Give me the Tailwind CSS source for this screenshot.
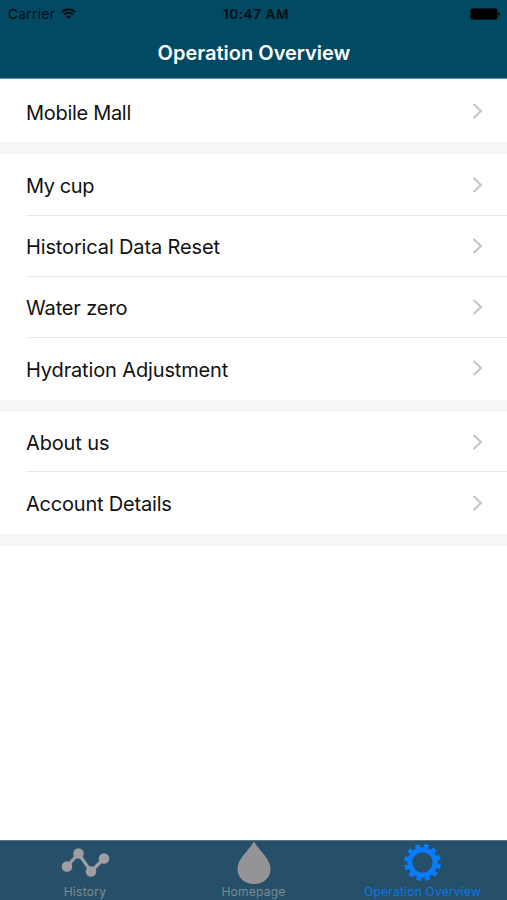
<!DOCTYPE html>
<html lang="en">
<head>
  <meta charset="UTF-8">
  <meta name="viewport" content="width=device-width, initial-scale=1.0">
  <title>Operation Overview</title>
  <script src="https://cdn.jsdelivr.net/npm/@tailwindcss/browser@4"></script>
</head>
<body class="bg-white font-['Inter',sans-serif] text-[#111111]">

<div class="flex flex-col h-[900px] w-[507px] overflow-hidden">

  <!-- Header -->
  <header class="h-[79px] shrink-0 bg-[#024963] border-b border-[#6b93a3]">
    <div class="grid grid-cols-3 items-center h-7 pl-2 pr-[7px] text-[#020c12]">
      <div class="flex items-center gap-1.5">
        <span class="text-[13.5px] tracking-[0.45px]">Carrier</span>
        <svg class="w-[15px] h-[11px] mb-0.5" viewBox="0 0 15 11" fill="none" stroke="currentColor" stroke-width="1.9">
          <path d="M0.8 4.1C4.6 0.3 10.4 0.3 14.2 4.1"/>
          <path d="M3.2 6.6C5.7 4.2 9.3 4.2 11.8 6.6"/>
          <path d="M7.5 10.8L5.1 8.4C6.5 7.1 8.5 7.1 9.9 8.4Z" fill="currentColor" stroke="none"/>
        </svg>
      </div>
      <span class="text-center text-[13.5px] font-semibold tracking-[0.6px] whitespace-nowrap -mx-2 pl-1">10:47 AM</span>
      <svg class="justify-self-end w-[30px] h-3" viewBox="0 0 30 12" fill="#000">
        <rect x="0.5" y="0.5" width="27" height="11" rx="1.5"/>
        <path d="M28.3 4.2C30.2 4.6 30.2 7.4 28.3 7.8Z"/>
      </svg>
    </div>
    <h1 class="text-center text-[20px] leading-[50px] font-semibold text-white pl-[1px]">Operation Overview</h1>
  </header>

  <!-- Settings list -->
  <main class="grow text-[20px] tracking-[-0.14px]">
    <section class="border-b-12 border-[#f6f6f6]">
      <a class="flex items-center justify-between h-[63px] pl-[26px] pr-6 pt-px">
        <span class="pt-[3px] tracking-[-0.3px]">Mobile Mall</span>
        <svg class="w-[11px] h-4" viewBox="0 0 11 16" fill="none" stroke="#c4c4c8" stroke-width="2"><path d="M1.5 1L9 8L1.5 15"/></svg>
      </a>
    </section>

    <section class="border-b-12 border-[#f6f6f6]">
      <a class="flex items-center justify-between h-[61px] pl-[26px] pr-6">
        <span class="pt-0.5 tracking-[-0.4px]">My cup</span>
        <svg class="w-[11px] h-4" viewBox="0 0 11 16" fill="none" stroke="#c4c4c8" stroke-width="2"><path d="M1.5 1L9 8L1.5 15"/></svg>
      </a>
      <a class="flex items-center justify-between h-[61px] ml-[26px] pr-6 border-t border-[#e9e9eb]">
        <span class="pt-0.5">Historical Data Reset</span>
        <svg class="w-[11px] h-4" viewBox="0 0 11 16" fill="none" stroke="#c4c4c8" stroke-width="2"><path d="M1.5 1L9 8L1.5 15"/></svg>
      </a>
      <a class="flex items-center justify-between h-[61px] ml-[26px] pr-6 border-t border-[#e9e9eb]">
        <span class="pt-0.5">Water zero</span>
        <svg class="w-[11px] h-4" viewBox="0 0 11 16" fill="none" stroke="#c4c4c8" stroke-width="2"><path d="M1.5 1L9 8L1.5 15"/></svg>
      </a>
      <a class="flex items-center justify-between h-[63px] ml-[26px] pr-6 pb-0.5 border-t border-[#e9e9eb]">
        <span class="pt-[3px]">Hydration Adjustment</span>
        <svg class="w-[11px] h-4" viewBox="0 0 11 16" fill="none" stroke="#c4c4c8" stroke-width="2"><path d="M1.5 1L9 8L1.5 15"/></svg>
      </a>
    </section>

    <section class="border-b-12 border-[#f6f6f6]">
      <a class="flex items-center justify-between h-[59px] pl-[26px] pr-6">
        <span class="pt-0.5">About us</span>
        <svg class="w-[11px] h-4" viewBox="0 0 11 16" fill="none" stroke="#c4c4c8" stroke-width="2"><path d="M1.5 1L9 8L1.5 15"/></svg>
      </a>
      <a class="flex items-center justify-between h-[63px] ml-[26px] pr-6 pb-px border-t border-[#e9e9eb]">
        <span class="pt-0.5 tracking-[-0.2px]">Account Details</span>
        <svg class="w-[11px] h-4" viewBox="0 0 11 16" fill="none" stroke="#c4c4c8" stroke-width="2"><path d="M1.5 1L9 8L1.5 15"/></svg>
      </a>
    </section>
  </main>

  <!-- Tab bar -->
  <nav class="grid grid-cols-3 h-[60px] shrink-0 bg-[#265069] border-t border-[#5a7585] text-[12px] leading-4 text-center text-[#7f8a92]">
    <a class="flex flex-col items-center">
      <svg class="w-[50px] h-[43px]" viewBox="0 0 50 43" fill="#a09ea0">
        <path d="M7 25.5L18.5 12.5L31 30.5L44 17.5" fill="none" stroke="#a09ea0" stroke-width="3.2"/>
        <circle cx="7" cy="25.5" r="5.3"/>
        <circle cx="18.5" cy="12.5" r="5.3"/>
        <circle cx="31" cy="30.5" r="5.3"/>
        <circle cx="44" cy="17.5" r="5.3"/>
      </svg>
      <span class="tracking-[0.3px] pl-px">History</span>
    </a>
    <a class="flex flex-col items-center">
      <svg class="w-[34px] h-[43px]" viewBox="0 0 34 43" fill="#949496">
        <path d="M17 0.3C20.5 8.3 33.5 17 33.5 28C33.5 37 26 43 17 43C8 43 0.5 37 0.5 28C0.5 17 13.5 8.3 17 0.3Z"/>
      </svg>
      <span class="tracking-[0.25px]">Homepage</span>
    </a>
    <a class="flex flex-col items-center text-[#0878e8]">
      <svg class="w-[40px] h-[43px]" viewBox="0 0 40 43" fill="none" stroke="#0a7cfb">
        <circle cx="19.5" cy="21.5" r="12.7" stroke-width="5"/>
        <circle cx="19.5" cy="21.5" r="16.5" stroke-width="4" pathLength="24" stroke-dasharray="1.1 0.9" stroke-dashoffset="-0.3"/>
      </svg>
      <span class="tracking-[0.22px] whitespace-nowrap">Operation Overview</span>
    </a>
  </nav>

</div>

</body>
</html>
